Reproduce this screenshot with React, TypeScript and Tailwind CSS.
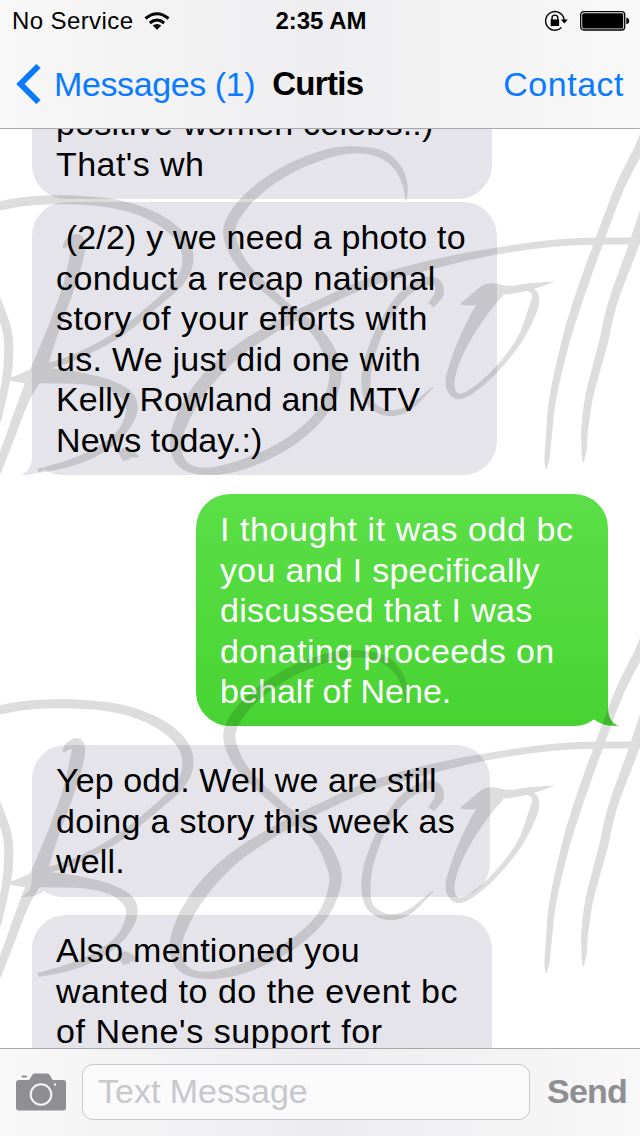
import React from 'react'

type Point = [x: number, y: number, width: number]

interface Line {
  text: string
  tracking?: string
}

interface Message {
  id: number
  from: 'them' | 'me'
  size: string
  tail?: boolean
  lines: Line[]
}

const MESSAGES: Message[] = [
  {
    id: 1,
    from: 'them',
    size: '-mt-[41px] h-[111px] w-[460px]',
    lines: [
      { text: 'positive women celebs.:)', tracking: 'tracking-[0.22px]' },
      { text: "That's wh", tracking: 'tracking-[0.45px]' },
    ],
  },
  {
    id: 2,
    from: 'them',
    size: 'mt-[3px] h-[273px] w-[465px]',
    tail: true,
    lines: [
      { text: ' (2/2) y we need a photo to', tracking: 'tracking-[0.2px]' },
      { text: 'conduct a recap national', tracking: 'tracking-[0.38px]' },
      { text: 'story of your efforts with', tracking: 'tracking-[0.44px]' },
      { text: 'us. We just did one with', tracking: 'tracking-[0.27px]' },
      { text: 'Kelly Rowland and MTV', tracking: 'tracking-[0.05px]' },
      { text: 'News today.:)', tracking: 'tracking-[0.08px]' },
    ],
  },
  {
    id: 3,
    from: 'me',
    size: 'mt-[19px] h-[232px] w-[412px]',
    tail: true,
    lines: [
      { text: 'I thought it was odd bc', tracking: 'tracking-[0.58px]' },
      { text: 'you and I specifically', tracking: 'tracking-[0.28px]' },
      { text: 'discussed that I was', tracking: 'tracking-[0.32px]' },
      { text: 'donating proceeds on', tracking: 'tracking-[0.38px]' },
      { text: 'behalf of Nene.', tracking: 'tracking-[0.05px]' },
    ],
  },
  {
    id: 4,
    from: 'them',
    size: 'mt-[19px] h-[152px] w-[458px]',
    tail: true,
    lines: [
      { text: 'Yep odd. Well we are still', tracking: 'tracking-[0.1px]' },
      { text: 'doing a story this week as', tracking: 'tracking-[0.3px]' },
      { text: 'well.', tracking: 'tracking-[0.2px]' },
    ],
  },
  {
    id: 5,
    from: 'them',
    size: 'mt-[18px] h-[193px] w-[460px]',
    lines: [
      { text: 'Also mentioned you', tracking: 'tracking-[0.3px]' },
      { text: 'wanted to do the event bc', tracking: 'tracking-[0.5px]' },
      { text: "of Nene's support for", tracking: 'tracking-[0.57px]' },
    ],
  },
]

// Pen strokes of the signature: centre line plus pen width at each point
const STROKES: Point[][] = [
  [[-6, 206, 9], [30, 200, 9], [75, 199, 9], [120, 204, 9], [156, 217, 10], [180, 236, 11], [188, 258, 11], [180, 280, 9], [156, 303, 7], [117, 334, 7], [75, 356, 6], [42, 367, 6], [12, 378, 3]],
  [[11, 378, 4], [25, 378, 8], [50, 375, 15], [85, 378, 11], [112, 385, 10], [129, 397, 12], [131, 413, 11], [120, 433, 8], [98, 450, 8], [70, 462, 7], [38, 470, 4]],
  [[63, 247, 2], [69, 241, 8], [78, 239, 11], [77, 254, 14], [68, 288, 12], [52, 332, 12], [38, 369, 15], [24, 399, 10], [9, 439, 9], [-3, 471, 8]],
  [[-8, 290, 9], [0, 308, 9], [8, 335, 9], [8, 365, 9], [4, 390, 8], [-3, 420, 8]],
  [[406, 200, 1], [405, 184, 5], [398, 167, 7], [383, 154, 8], [360, 149, 7], [330, 152, 9], [287, 169, 10], [251, 195, 11], [231, 222, 12], [232, 244, 12], [247, 269, 10], [281, 301, 8], [315, 329, 10], [331, 355, 13], [335, 380, 12], [320, 414, 10], [285, 444, 10], [238, 465, 10], [200, 470, 7], [179, 458, 10], [178, 429, 13], [200, 388, 14], [234, 353, 12], [277, 325, 10], [320, 303, 9], [370, 281, 9], [430, 264, 9], [497, 250, 7], [570, 241, 7], [648, 240, 7]],
  [[431, 304, 7], [439, 293, 9], [437, 282, 8], [424, 281, 9], [402, 295, 8], [382, 325, 8], [369, 359, 9], [366, 385, 9], [371, 403, 7], [388, 412, 6], [409, 407, 5], [433, 386, 1]],
  [[461, 303, 2], [475, 298, 12], [489, 289, 13], [510, 289, 8], [528, 286, 7], [553, 281, 1]],
  [[500, 291, 10], [486, 303, 15], [469, 330, 12], [455, 361, 9], [450, 383, 9], [457, 395, 6], [472, 390, 5], [497, 368, 5], [520, 338, 6], [533, 308, 9], [535, 293, 6], [525, 286, 4]],
  [[648, 126, 10], [639, 148, 10], [620, 186, 9], [600, 238, 9], [578, 300, 9], [565, 343, 8], [553, 396, 7], [549, 433, 6], [547, 457, 5], [546, 468, 1]],
  [[649, 200, 11], [632, 249, 10], [613, 301, 9], [603, 343, 9], [590, 392, 8], [585, 426, 7], [584, 449, 5], [583, 461, 1]],
  [[118, 449, 1], [124, 456, 7], [126, 453, 13], [131, 453, 8], [139, 456, 1]],
]

// Turns a stroke into a closed ribbon whose thickness follows the pen width
function ribbon(points: Point[]) {
  const samples: Point[] = []
  for (let i = 0; i < points.length - 1; i++) {
    const a = points[i - 1] ?? points[i]
    const b = points[i]
    const c = points[i + 1]
    const d = points[i + 2] ?? c
    for (let s = 0; s < 8; s++) {
      const t = s / 8
      samples.push([0, 1, 2].map(k =>
        0.5 * (2 * b[k] + (c[k] - a[k]) * t
          + (2 * a[k] - 5 * b[k] + 4 * c[k] - d[k]) * t * t
          + (3 * b[k] - a[k] - 3 * c[k] + d[k]) * t * t * t),
      ) as Point)
    }
  }
  samples.push(points[points.length - 1])

  const left: string[] = []
  const right: string[] = []
  samples.forEach(([x, y, w], i) => {
    const p = samples[Math.max(i - 1, 0)]
    const n = samples[Math.min(i + 1, samples.length - 1)]
    const len = Math.hypot(n[0] - p[0], n[1] - p[1]) || 1
    const nx = (-(n[1] - p[1]) / len) * (w / 2)
    const ny = ((n[0] - p[0]) / len) * (w / 2)
    left.push(`${(x + nx).toFixed(1)} ${(y + ny).toFixed(1)}`)
    right.unshift(`${(x - nx).toFixed(1)} ${(y - ny).toFixed(1)}`)
  })
  return `M${[...left, ...right].join('L')}Z`
}

const SIGNATURE = STROKES.map(ribbon)

function Watermark() {
  return (
    <svg className="absolute inset-0 pointer-events-none" width="640" height="919" viewBox="0 129 640 919">
      {[1, 505].map(offset => (
        <g key={offset} transform={`translate(0 ${offset})`} opacity="0.13">
          {SIGNATURE.map((d, i) => <path key={i} d={d} />)}
        </g>
      ))}
    </svg>
  )
}

function Bubble({ message }: { message: Message }) {
  const mine = message.from === 'me'
  return (
    <div
      className={`relative shrink-0 rounded-[34px] px-6 pt-[15px] ${message.size} ${
        mine
          ? 'self-end mr-8 bg-linear-to-b from-[#5bdf47] to-[#47d431] text-white'
          : 'self-start ml-8 bg-[#e5e4ea] text-black'
      }`}
    >
      {message.tail && !mine && (
        <svg className="absolute -left-3 bottom-0" width="48" height="40" viewBox="0 0 48 40">
          <path d="M12 0V20C12 32 8 38 0 39.500C10 41 20 38 24 34C30 38 36 40 46 40V0Z" fill="#e5e4ea" />
        </svg>
      )}
      {message.tail && mine && (
        <svg className="absolute -right-3 bottom-0" width="48" height="40" viewBox="0 0 48 40">
          <defs>
            <linearGradient id="tail" x1="0" y1="0" x2="0" y2="1">
              <stop offset="0" stopColor="#4ad635" />
              <stop offset="1" stopColor="#47d431" />
            </linearGradient>
          </defs>
          <path d="M36 0V20C36 32 40 38 47 39.500C38 41 28 38 23 34L16 30L34 0Z" fill="url(#tail)" />
        </svg>
      )}
      {message.lines.map(line => (
        <p key={line.text} className={`relative whitespace-pre text-[34px] leading-[40.6px] ${line.tracking ?? ''}`}>
          {line.text}
        </p>
      ))}
    </div>
  )
}

function StatusBar() {
  return (
    <div className="grid h-10 grid-cols-3 items-center pl-3 pr-[10px] pt-px text-2xl leading-10">
      <div className="flex items-center gap-[11px]">
        <span className="whitespace-nowrap tracking-[0.4px]">No Service</span>
        <svg width="26" height="18" viewBox="0 0 26 18" fill="none" stroke="#000" strokeWidth="3">
          <path d="M1.500 6.500Q13 -3 24.500 6.500" />
          <path d="M5.800 11Q13 5 20.200 11" />
          <path d="M8.700 13.600Q13 10.200 17.300 13.600L13 17.800Z" fill="#000" stroke="none" />
        </svg>
      </div>
      <span className="text-center font-bold">2:35 AM</span>
      <div className="flex items-center justify-end gap-3">
        <svg width="24" height="22" viewBox="0 0 24 22" fill="none" stroke="#000" strokeWidth="1.400">
          <path d="M17.500 17.500A9.300 9.300 0 1 1 20.200 10" />
          <path d="M16.800 9.500H23.800L20.300 13.400Z" fill="#000" stroke="none" />
          <path d="M8 10V8a2.900 2.900 0 0 1 5.800 0v2" />
          <path d="M6.700 9.500h8.400v6.500H6.700Z" fill="#000" stroke="none" />
        </svg>
        <svg width="50" height="20" viewBox="0 0 50 20">
          <rect x="0.700" y="0.700" width="44" height="18.300" rx="3" fill="none" stroke="#000" strokeWidth="1.300" />
          <rect x="2.200" y="2.200" width="41" height="15.300" rx="1.500" />
          <path d="M46.300 6.500Q49.200 7 49.200 10T46.300 13Z" />
        </svg>
      </div>
    </div>
  )
}

function NavBar() {
  return (
    <div className="flex h-[88px] items-center px-4 text-[34px] text-[#0a7aff]">
      <svg className="mr-[13px]" width="25" height="40" viewBox="0 0 25 40" fill="none" stroke="#0a7aff" strokeWidth="6">
        <path d="M22.500 2L4.500 20L22.500 38" />
      </svg>
      <span className="whitespace-nowrap tracking-[-0.4px]">Messages (1)</span>
      <h1 className="ml-[17px] text-[33px] font-bold tracking-[-0.7px] text-black">Curtis</h1>
      <span className="ml-auto tracking-[0.5px]">Contact</span>
    </div>
  )
}

function Composer() {
  return (
    <footer className="flex h-[88px] shrink-0 items-center border-t border-[#a9a9ad] bg-linear-to-r from-[#f8f8f8] via-[#ededf0] to-[#f8f8f8] pb-0.5 pl-4 pr-[13px]">
      <svg width="50" height="38" viewBox="0 0 50 38" fill="#8e8e93">
        <path d="M3 7H12.500C15 7 15 0.500 19 0.500H31C35 0.500 35 7 37.500 7H47Q50 7 50 10V34.500Q50 37.500 47 37.500H3Q0 37.500 0 34.500V10Q0 7 3 7Z" />
        <rect x="5.500" y="2.500" width="5.500" height="2" rx="1" />
        <circle cx="25" cy="21.500" r="10.300" fill="none" stroke="#f5f5f6" strokeWidth="2" />
        <circle cx="39" cy="11.500" r="1.200" fill="#f5f5f6" />
      </svg>
      <div className="ml-4 flex h-14 w-[448px] items-center rounded-[11px] border border-[#c8c8cd] bg-[#fafafa] pl-[15px] text-[34px] text-[#c7c7cc]">
        Text Message
      </div>
      <span className="ml-auto text-[34px] font-bold tracking-[-0.8px] text-[#8e8e93]">Send</span>
    </footer>
  )
}

export default function App() {
  return (
    <div className="flex h-[1136px] w-[640px] flex-col overflow-hidden bg-white font-['Liberation_Sans',Arial,sans-serif]">
      <header className="h-[129px] shrink-0 border-b border-[#a9a9ad] bg-linear-to-r from-[#f8f8f8] via-[#eeeef0] to-[#f9f9f9]">
        <StatusBar />
        <NavBar />
      </header>
      <main className="relative flex h-[919px] shrink-0 flex-col overflow-hidden">
        {MESSAGES.map(message => <Bubble key={message.id} message={message} />)}
        <Watermark />
      </main>
      <Composer />
    </div>
  )
}
